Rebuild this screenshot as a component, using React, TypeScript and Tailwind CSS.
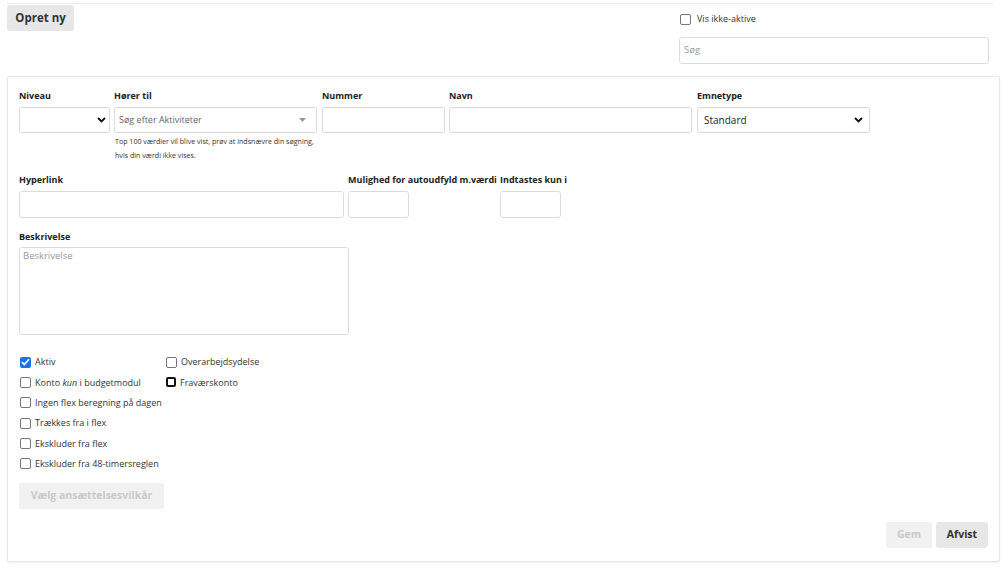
import React from 'react'

const font = { fontFamily: '"Open Sans", "Liberation Sans", sans-serif' }

function Chevron() {
  return (
    <svg width="9" height="6" viewBox="0 0 9 6" className="shrink-0">
      <path d="M1 1l3.5 3.5L8 1" fill="none" stroke="#111" strokeWidth="1.8" />
    </svg>
  )
}

function Box({ checked, focus }: { checked?: boolean; focus?: boolean }) {
  if (checked) {
    return (
      <span className="flex h-[11px] w-[11px] shrink-0 items-center justify-center rounded-[2px] bg-[#1a73e8]">
        <svg width="9" height="8" viewBox="0 0 9 8">
          <path d="M1 4.2l2.3 2.3L8 1.2" fill="none" stroke="#fff" strokeWidth="1.7" />
        </svg>
      </span>
    )
  }
  return (
    <span
      className={
        focus
          ? 'h-[10px] w-[10px] shrink-0 rounded-[2px] border-[2px] border-[#111]'
          : 'h-[11px] w-[11px] shrink-0 rounded-[2px] border border-[#777]'
      }
    />
  )
}

function Check({ label, checked, focus }: { label: React.ReactNode; checked?: boolean; focus?: boolean }) {
  return (
    <div className="flex h-[20.3px] items-center gap-[4px]">
      <Box checked={checked} focus={focus} />
      <span className="whitespace-nowrap text-[9px] text-[#333]">{label}</span>
    </div>
  )
}

function Label({ children }: { children: React.ReactNode }) {
  return <div className="mb-[4px] h-[14px] whitespace-nowrap text-[9px] leading-[14px] font-bold text-[#222]">{children}</div>
}

const input = 'h-[26px] rounded-[3px] border border-[#dcdcdc] bg-white'

export default function App() {
  return (
    <div className="min-h-[569px] bg-white pt-[3px]" style={font}>
      <div className="mx-[7px] mr-[10px] border-t border-[#ececec]" />
      <div className="flex justify-between pl-[7px] pr-[14px]">
        <button className="mt-[1px] h-[26px] w-[67px] rounded-[3px] bg-[#e7e7e7] text-[11.5px] font-bold text-[#333]">
          Opret ny
        </button>
        <div className="w-[310px] pt-[9px]">
          <div className="flex h-[12px] items-center gap-[6px] pl-[1px]">
            <Box />
            <span className="text-[9px] text-[#333]">Vis ikke-aktive</span>
          </div>
          <div className="mt-[12px] flex h-[27px] items-center rounded-[3px] border border-[#dcdcdc] px-[4px] text-[9.5px] text-[#9a9a9a]">
            Søg
          </div>
        </div>
      </div>

      <div className="ml-[7px] mr-[3px] mt-[12px] rounded-[2px] border border-[#e6e6e6] px-[11px] pb-[13px] pt-[12px] shadow-[0_1px_2px_rgba(0,0,0,0.08)]">
        <div className="flex">
          <div className="w-[91px]">
            <Label>Niveau</Label>
            <div className={input + ' flex items-center justify-end pr-[3px]'}>
              <Chevron />
            </div>
          </div>
          <div className="ml-[4px] w-[203px]">
            <Label>Hører til</Label>
            <div className={input + ' flex items-center justify-between px-[4px]'}>
              <span className="text-[9px] text-[#666]">Søg efter Aktiviteter</span>
              <svg width="7" height="4" viewBox="0 0 7 4" className="mr-[6px]">
                <path d="M0 0h7L3.5 4z" fill="#999" />
              </svg>
            </div>
            <div className="mt-[1px] whitespace-nowrap pl-[1px] text-[7.1px] leading-[14px] text-[#333]">
              Top 100 værdier vil blive vist, prøv at indsnævre din søgning,
              <br />
              hvis din værdi ikke vises.
            </div>
          </div>
          <div className="ml-[5px] w-[123px]">
            <Label>Nummer</Label>
            <div className={input} />
          </div>
          <div className="ml-[4px] w-[243px]">
            <Label>Navn</Label>
            <div className={input} />
          </div>
          <div className="ml-[5px] w-[173px]">
            <Label>Emnetype</Label>
            <div className={input + ' flex items-center justify-between px-[6px]'}>
              <span className="text-[10px] text-[#222]">Standard</span>
              <Chevron />
            </div>
          </div>
        </div>

        <div className="mt-[11px] flex">
          <div className="w-[325px]">
            <Label>Hyperlink</Label>
            <div className={input + ' h-[27px]'} />
          </div>
          <div className="ml-[4px] w-[148px]">
            <Label>Mulighed for autoudfyld m.værdi</Label>
            <div className={input + ' h-[27px] w-[61px]'} />
          </div>
          <div className="ml-[4px] w-[120px]">
            <Label>Indtastes kun i</Label>
            <div className={input + ' h-[27px] w-[61px]'} />
          </div>
        </div>

        <div className="mt-[12px]">
          <div className="h-[14px] text-[9px] leading-[14px] font-bold text-[#222]">Beskrivelse</div>
          <div className="mt-[3px] h-[88px] w-[330px] rounded-[3px] border border-[#dcdcdc] px-[3px] pt-[1px] text-[9.5px] text-[#9a9a9a]">
            Beskrivelse
          </div>
        </div>

        <div className="mt-[17px] flex">
          <div className="w-[147px] pl-[1px]">
            <Check label="Aktiv" checked />
            <Check
              label={
                <>
                  Konto <i>kun</i> i budgetmodul
                </>
              }
            />
            <Check label="Ingen flex beregning på dagen" />
            <Check label="Trækkes fra i flex" />
            <Check label="Ekskluder fra flex" />
            <Check label="Ekskluder fra 48-timersreglen" />
          </div>
          <div>
            <Check label="Overarbejdsydelse" />
            <Check label="Fraværskonto" focus />
          </div>
        </div>

        <button className="mt-[9px] h-[26px] w-[145px] rounded-[3px] bg-[#f1f1f1] text-[10.5px] font-bold text-[#c9c9c9]">
          Vælg ansættelsesvilkår
        </button>

        <div className="mt-[13px] flex justify-end gap-[4px]">
          <button className="h-[26px] w-[46px] rounded-[3px] bg-[#f1f1f1] text-[10.5px] font-bold text-[#c9c9c9]">Gem</button>
          <button className="h-[26px] w-[52px] rounded-[3px] bg-[#e7e7e7] text-[10.5px] font-bold text-[#333]">Afvist</button>
        </div>
      </div>
    </div>
  )
}
